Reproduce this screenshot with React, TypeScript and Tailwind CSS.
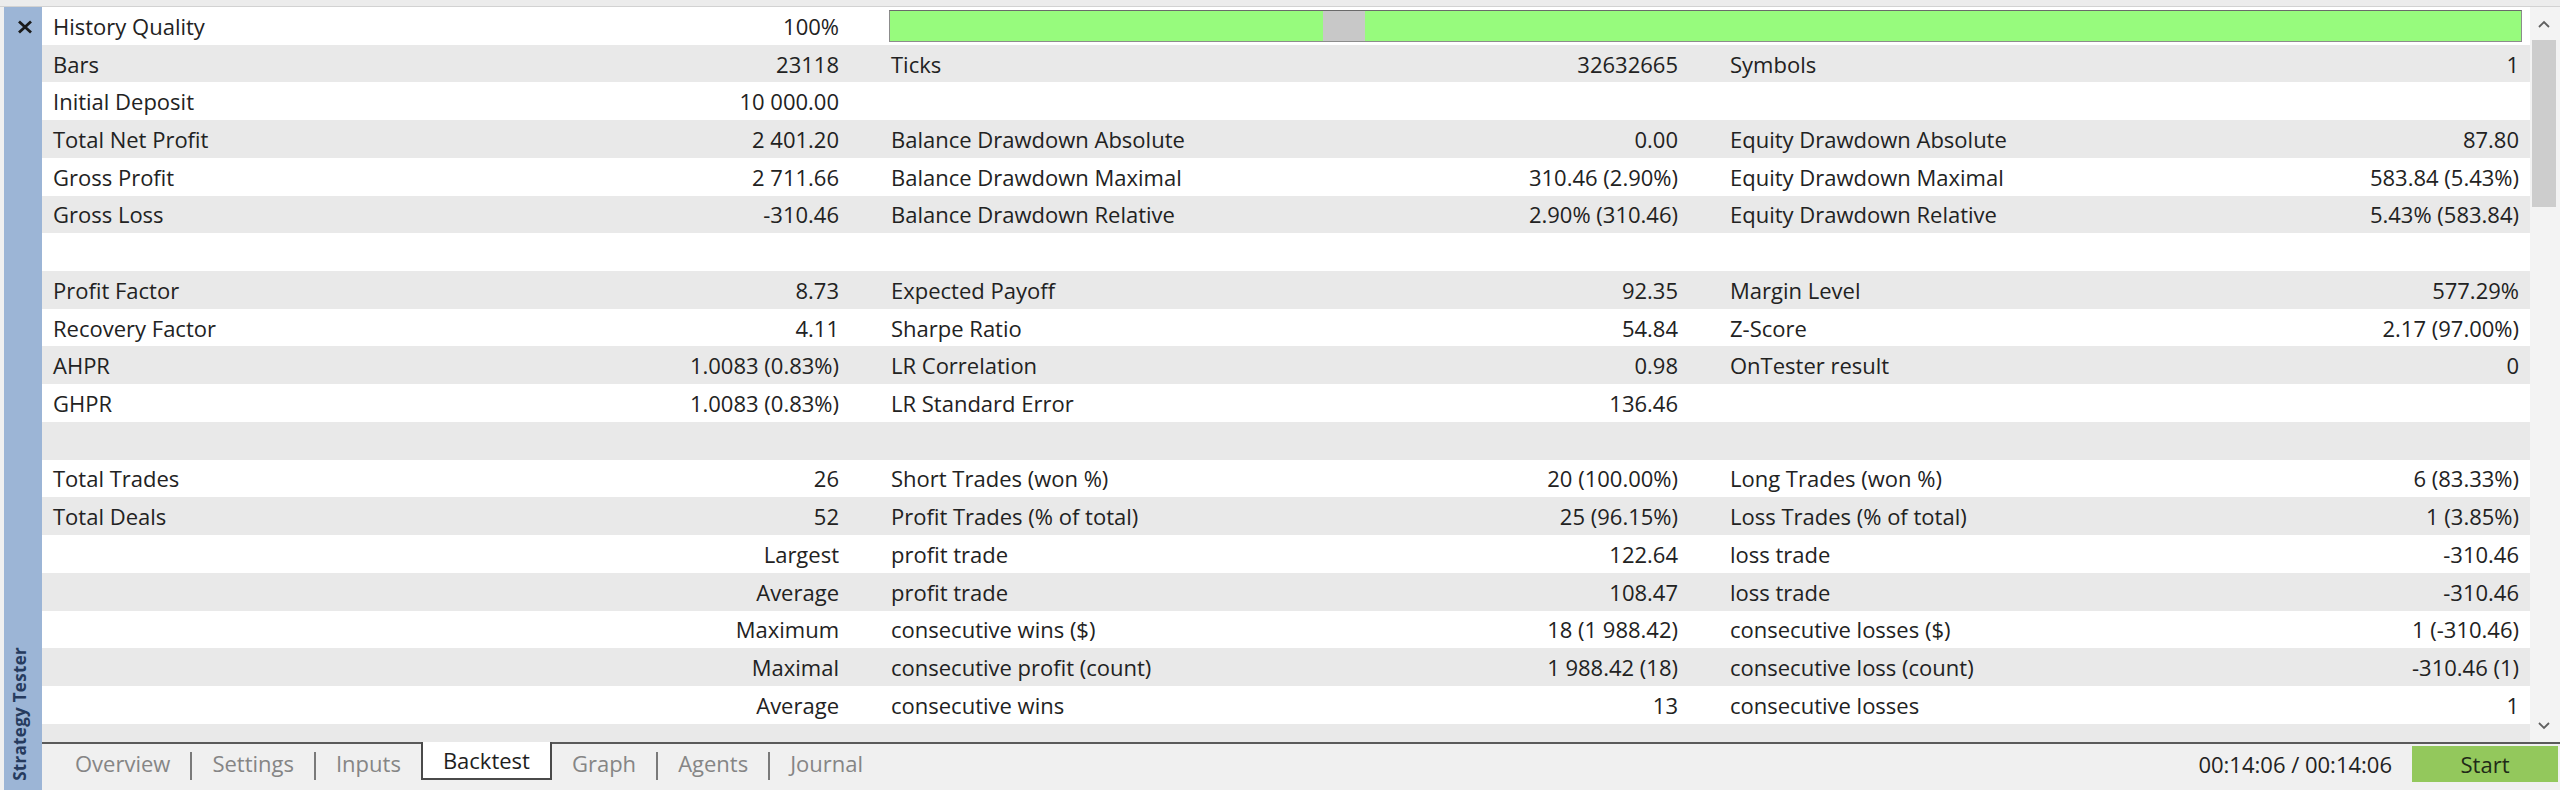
import React from 'react';

type Cell = [string, string] | [];

const rows: (Cell[] | 'bar' | null)[] = [
  'bar',
  [['Bars', '23118'], ['Ticks', '32632665'], ['Symbols', '1']],
  [['Initial Deposit', '10 000.00'], [], []],
  [['Total Net Profit', '2 401.20'], ['Balance Drawdown Absolute', '0.00'], ['Equity Drawdown Absolute', '87.80']],
  [['Gross Profit', '2 711.66'], ['Balance Drawdown Maximal', '310.46 (2.90%)'], ['Equity Drawdown Maximal', '583.84 (5.43%)']],
  [['Gross Loss', '-310.46'], ['Balance Drawdown Relative', '2.90% (310.46)'], ['Equity Drawdown Relative', '5.43% (583.84)']],
  null,
  [['Profit Factor', '8.73'], ['Expected Payoff', '92.35'], ['Margin Level', '577.29%']],
  [['Recovery Factor', '4.11'], ['Sharpe Ratio', '54.84'], ['Z-Score', '2.17 (97.00%)']],
  [['AHPR', '1.0083 (0.83%)'], ['LR Correlation', '0.98'], ['OnTester result', '0']],
  [['GHPR', '1.0083 (0.83%)'], ['LR Standard Error', '136.46'], []],
  null,
  [['Total Trades', '26'], ['Short Trades (won %)', '20 (100.00%)'], ['Long Trades (won %)', '6 (83.33%)']],
  [['Total Deals', '52'], ['Profit Trades (% of total)', '25 (96.15%)'], ['Loss Trades (% of total)', '1 (3.85%)']],
  [['', 'Largest'], ['profit trade', '122.64'], ['loss trade', '-310.46']],
  [['', 'Average'], ['profit trade', '108.47'], ['loss trade', '-310.46']],
  [['', 'Maximum'], ['consecutive wins ($)', '18 (1 988.42)'], ['consecutive losses ($)', '1 (-310.46)']],
  [['', 'Maximal'], ['consecutive profit (count)', '1 988.42 (18)'], ['consecutive loss (count)', '-310.46 (1)']],
  [['', 'Average'], ['consecutive wins', '13'], ['consecutive losses', '1']],
];

const tabs = ['Overview', 'Settings', 'Inputs', 'Backtest', 'Graph', 'Agents', 'Journal'];

function Pair({ cell }: { cell: Cell }) {
  return (
    <div className="flex items-center justify-between px-[11px]">
      <span>{cell[0]}</span>
      <span>{cell[1]}</span>
    </div>
  );
}

function Row({ row, i }: { row: Cell[] | 'bar' | null; i: number }) {
  const bg = i % 2 === 0 ? 'bg-white' : 'bg-[#e9e9e9]';
  if (row === 'bar') {
    return (
      <div className={`h-[37.73px] grid grid-cols-[808px_1fr] gap-x-[39px] ${bg}`}>
        <Pair cell={['History Quality', '100%']} />
        <div className="flex items-center pr-[8px]">
          <div className="h-[32px] w-full flex border border-[#8c8c8c] border-t-[#6a6a6a] bg-[#97fb7d]">
            <div className="w-[433px]" />
            <div className="w-[42px] bg-[#c8c8c8]" />
          </div>
        </div>
      </div>
    );
  }
  return (
    <div className={`h-[37.73px] grid grid-cols-[808px_809px_811px] gap-x-[30px] ${bg}`}>
      {(row ?? [[], [], []]).map((c, k) => (
        <Pair key={k} cell={c} />
      ))}
    </div>
  );
}

export default function App() {
  return (
    <div className="w-[2560px] h-[790px] bg-[#f0f0f0] flex flex-col overflow-hidden text-[22px] leading-none text-[#222] font-['Open_Sans',sans-serif]">
      <div className="h-[7px] shrink-0 bg-[#ececec] border-b border-[#d2d2d2]" />
      <div className="flex flex-1 min-h-0">
        <div className="w-[4px] bg-[#f0f0f0]" />
        <aside className="w-[38px] bg-[#9cb5d6] flex flex-col justify-between">
          <svg className="ml-[13px] mt-[13px]" width="16" height="14" viewBox="0 0 16 14">
            <path d="M2 1.5 L14 12.5 M14 1.5 L2 12.5" stroke="#1a1a1a" strokeWidth="2.8" />
          </svg>
          <div className="pl-[7px] pb-[9px]">
            <div className="[writing-mode:vertical-rl] rotate-180 text-[17px] font-bold text-[#263b5e] tracking-[0.3px]">
              Strategy Tester
            </div>
          </div>
        </aside>
        <div className="flex-1 flex flex-col min-w-0">
          <div className="flex h-[735px]">
            <div className="flex-1 bg-[#e9e9e9] flex flex-col">
              {rows.map((r, i) => (
                <Row key={i} row={r} i={i} />
              ))}
            </div>
            <div className="w-[30px] bg-[#f3f3f3] flex flex-col items-center pr-[3px]">
              <div className="h-[33px] flex items-center justify-center">
                <svg width="12" height="8" viewBox="0 0 12 8">
                  <path d="M1 7 L6 2 L11 7" fill="none" stroke="#606060" strokeWidth="1.8" />
                </svg>
              </div>
              <div className="w-[24px] h-[167px] bg-[#cdcdcd]" />
              <div className="flex-1" />
              <div className="h-[33px] flex items-center justify-center">
                <svg width="12" height="8" viewBox="0 0 12 8">
                  <path d="M1 1 L6 6 L11 1" fill="none" stroke="#606060" strokeWidth="1.8" />
                </svg>
              </div>
            </div>
          </div>
          <div className="flex-1 flex border-t-2 border-[#5a5a5a] bg-[#f0f0f0]">
            <div className="flex items-start pl-[13px]">
              {tabs.map((t, i) => {
                const active = t === 'Backtest';
                const prevActive = tabs[i - 1] === 'Backtest';
                return (
                  <React.Fragment key={t}>
                    {i > 0 && !active && !prevActive && <div className="w-[2px] h-[28px] mt-[8px] bg-[#7a7a7a]" />}
                    {active ? (
                      <div className="-mt-[2px] h-[38px] px-[20px] flex items-center bg-white border-x-2 border-b-2 border-[#4a4a4a] text-[#1e1e1e]">
                        {t}
                      </div>
                    ) : (
                      <div className="h-[38px] px-[20px] flex items-center text-[#858585]">{t}</div>
                    )}
                  </React.Fragment>
                );
              })}
            </div>
            <div className="flex-1" />
            <div className="flex items-start pt-[2px]">
              <div className="h-[36px] flex items-center mr-[20px]">00:14:06 / 00:14:06</div>
              <div className="w-[146px] h-[36px] bg-[#93c85c] flex items-center justify-center text-[#1f2a17] mr-[2px]">
                Start
              </div>
            </div>
          </div>
        </div>
      </div>
    </div>
  );
}
